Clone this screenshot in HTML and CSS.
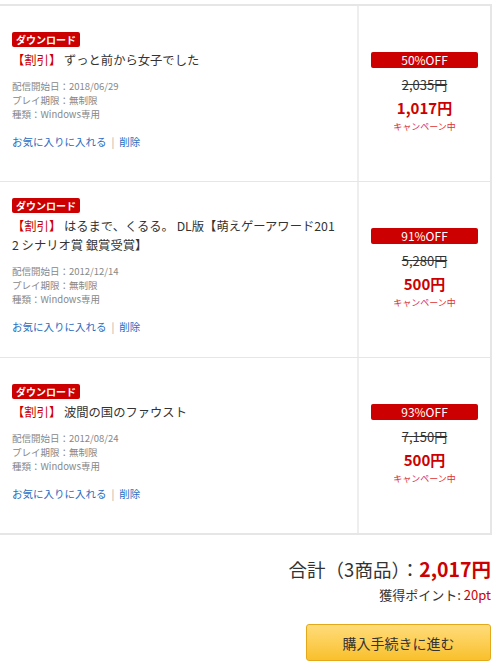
FILE: index.html
```html
<!DOCTYPE html>
<html lang="ja">
<head>
    <meta charset="UTF-8">
    <meta name="viewport" content="width=device-width, initial-scale=1.0">
    <title>カート</title>
    <link rel="stylesheet" href="styles.css">
</head>
<body>
    <div class="cart">
        <div class="item">
            <div class="info">
                <span class="badge">ダウンロード</span>
                <p class="title"><span class="sale">【割引】</span> ずっと前から女子でした</p>
                <ul class="meta">
                    <li>配信開始日：2018/06/29</li>
                    <li>プレイ期限：無制限</li>
                    <li>種類：Windows専用</li>
                </ul>
                <p class="links"><a href="#">お気に入りに入れる</a><span class="sep">|</span><a href="#">削除</a></p>
            </div>
            <div class="price">
                <span class="off">50%OFF</span>
                <p class="old">2,035円</p>
                <p class="now">1,017円</p>
                <p class="camp">キャンペーン中</p>
            </div>
        </div>
        <div class="item">
            <div class="info">
                <span class="badge">ダウンロード</span>
                <p class="title"><span class="sale">【割引】</span> はるまで、くるる。 DL版【萌えゲーアワード2012 シナリオ賞 銀賞受賞】</p>
                <ul class="meta">
                    <li>配信開始日：2012/12/14</li>
                    <li>プレイ期限：無制限</li>
                    <li>種類：Windows専用</li>
                </ul>
                <p class="links"><a href="#">お気に入りに入れる</a><span class="sep">|</span><a href="#">削除</a></p>
            </div>
            <div class="price">
                <span class="off">91%OFF</span>
                <p class="old">5,280円</p>
                <p class="now">500円</p>
                <p class="camp">キャンペーン中</p>
            </div>
        </div>
        <div class="item">
            <div class="info">
                <span class="badge">ダウンロード</span>
                <p class="title"><span class="sale">【割引】</span> 波間の国のファウスト</p>
                <ul class="meta">
                    <li>配信開始日：2012/08/24</li>
                    <li>プレイ期限：無制限</li>
                    <li>種類：Windows専用</li>
                </ul>
                <p class="links"><a href="#">お気に入りに入れる</a><span class="sep">|</span><a href="#">削除</a></p>
            </div>
            <div class="price">
                <span class="off">93%OFF</span>
                <p class="old">7,150円</p>
                <p class="now">500円</p>
                <p class="camp">キャンペーン中</p>
            </div>
        </div>
    </div>
    <div class="summary">
        <p class="total">合計（3商品）：<strong>2,017円</strong></p>
        <p class="points">獲得ポイント: <span>20pt</span></p>
        <button class="checkout">購入手続きに進む</button>
    </div>
</body>
</html>
```

FILE: styles.css
```css
body {
    font-family: "Noto Sans CJK JP", "Noto Sans", sans-serif;
    background-color: #fff;
    color: #333;
    margin: 0;
    padding: 4px 0 0 0;
    width: 492px;
}

p, ul {
    margin: 0;
    padding: 0;
}

.cart {
    border: 2px solid #e6e6e6;
    border-left: none;
    width: 490px;
}

.item {
    display: flex;
    height: 175px;
    border-bottom: 1px solid #e6e6e6;
}

.item:last-child {
    border-bottom: none;
}

.info {
    width: 333px;
    padding: 0 12px 6px;
    border-right: 2px solid #eee;
    display: flex;
    flex-direction: column;
    align-items: flex-start;
    justify-content: center;
}

.badge {
    background-color: #cc0000;
    color: #fff;
    font-size: 10px;
    font-weight: bold;
    line-height: 15px;
    padding: 0 4px;
    border-radius: 2px;
}

.title {
    max-width: 326px;
    font-size: 12.3px;
    line-height: 19px;
    margin-top: 4px;
    color: #333;
    word-break: break-all;
}

.sale {
    color: #cc0000;
}

.meta {
    list-style: none;
    margin-top: 9px;
    font-size: 9.5px;
    line-height: 14px;
    color: #888;
}

.links {
    margin-top: 13px;
    font-size: 10.5px;
    line-height: 16px;
}

.links a {
    color: #2a6cc0;
    text-decoration: none;
}

.sep {
    color: #aaa;
    margin: 0 5px;
}

.price {
    flex: 1;
    display: flex;
    flex-direction: column;
    align-items: center;
    justify-content: center;
    padding: 0 12px 2px;
    text-align: center;
}

.off {
    align-self: stretch;
    background-color: #cc0000;
    color: #fff;
    font-size: 12px;
    line-height: 16px;
    border-radius: 2px;
}

.old {
    margin-top: 8px;
    font-size: 13px;
    line-height: 18px;
    text-decoration: line-through;
    color: #333;
}

.now {
    margin-top: 5px;
    font-size: 15px;
    font-weight: bold;
    line-height: 18px;
    color: #cc0000;
}

.camp {
    margin-top: 3px;
    font-size: 9px;
    line-height: 14px;
    color: #d33;
}

.summary {
    display: flex;
    flex-direction: column;
    align-items: flex-end;
    padding-top: 20px;
    width: 491px;
}

.total {
    font-size: 18.5px;
    line-height: 27px;
    color: #333;
}

.total strong {
    font-size: 19.5px;
    color: #cc0000;
}

.points {
    margin-top: 2px;
    font-size: 13px;
    line-height: 19px;
    color: #333;
}

.points span {
    color: #cc0000;
}

.checkout {
    margin-top: 20px;
    width: 185px;
    height: 37px;
    font-family: inherit;
    font-size: 14px;
    color: #333;
    background: linear-gradient(to bottom, #ffdc7a, #f9c02d);
    border: 1px solid #e3a91a;
    border-radius: 3px;
    cursor: pointer;
}
```
